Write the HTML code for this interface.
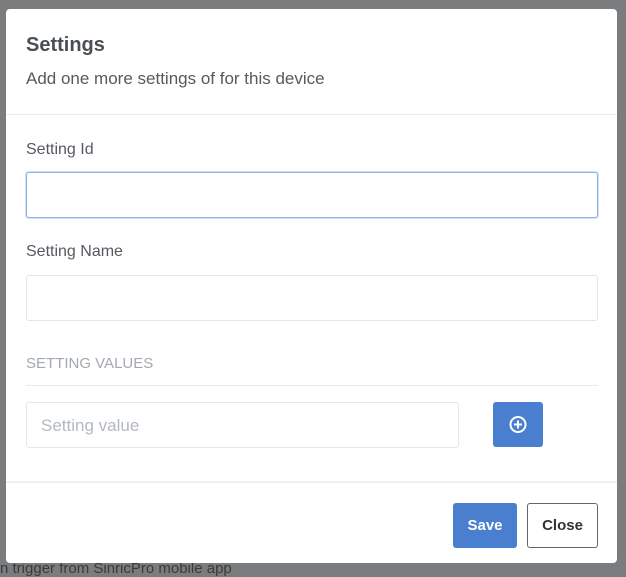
<!DOCTYPE html>
<html><head><style>
body{margin:0;width:626px;height:575px;background:#7b7c7e;font-family:"Liberation Sans",sans-serif;position:relative;overflow:hidden}
.bg{position:absolute;color:#333;font-size:16px}
.m{position:absolute;left:6px;top:9px;width:611px;height:554px;background:#fff;border-radius:4px}
.a{position:absolute}
.in{position:absolute;box-sizing:border-box;border:1px solid #e3e6ea;border-radius:3px;background:#fff}
</style></head><body>
<div class="bg" style="left:0;top:560px;color:#3a3a3a;font-size:15px">n trigger from SinricPro mobile app</div>
<div class="m">
<div class="a" style="left:20px;top:25px;font-size:20px;font-weight:bold;color:#4a4f55">Settings</div>
<div class="a" style="left:20px;top:60px;font-size:17px;color:#555a60">Add one more settings of for this device</div>
<div class="a" style="left:0;top:105px;width:611px;height:1px;background:#e8eaf0"></div>
<div class="a" style="left:20px;top:132px;font-size:16px;color:#555a60">Setting Id</div>
<div class="in" style="left:20px;top:163px;width:572px;height:46px;border:1px solid #8fb5e6;box-shadow:0 0 0 1px #cfe0f5"></div>
<div class="a" style="left:20px;top:234px;font-size:16px;color:#555a60">Setting Name</div>
<div class="in" style="left:20px;top:266px;width:572px;height:46px"></div>
<div class="a" style="left:20px;top:346px;font-size:15px;color:#a3a9b0">SETTING VALUES</div>
<div class="a" style="left:20px;top:376px;width:572px;height:1px;background:#e8eaf0"></div>
<div class="in" style="left:20px;top:393px;width:433px;height:46px"></div>
<div class="a" style="left:35px;top:407px;font-size:17px;color:#b3b9c0">Setting value</div>
<div class="a" style="left:487px;top:393px;width:50px;height:45px;background:#4a7fd0;border-radius:3px">
<svg width="50" height="45"><circle cx="25" cy="22.5" r="7.5" fill="none" stroke="#fff" stroke-width="2"/><path d="M25 18.5v8M21 22.5h8" stroke="#fff" stroke-width="2"/></svg></div>
<div class="a" style="left:0;top:472px;width:611px;height:2px;background:#eef0f3"></div>
<div class="a" style="left:447px;top:494px;width:64px;height:45px;background:#4a7fd0;border-radius:3px;color:#fff;font-weight:bold;font-size:15px;line-height:45px;text-align:center">Save</div>
<div class="a" style="left:521px;top:494px;width:71px;height:45px;box-sizing:border-box;border:1px solid #666;border-radius:3px;color:#333;font-weight:bold;font-size:15px;line-height:43px;text-align:center">Close</div>
</div>
</body></html>
